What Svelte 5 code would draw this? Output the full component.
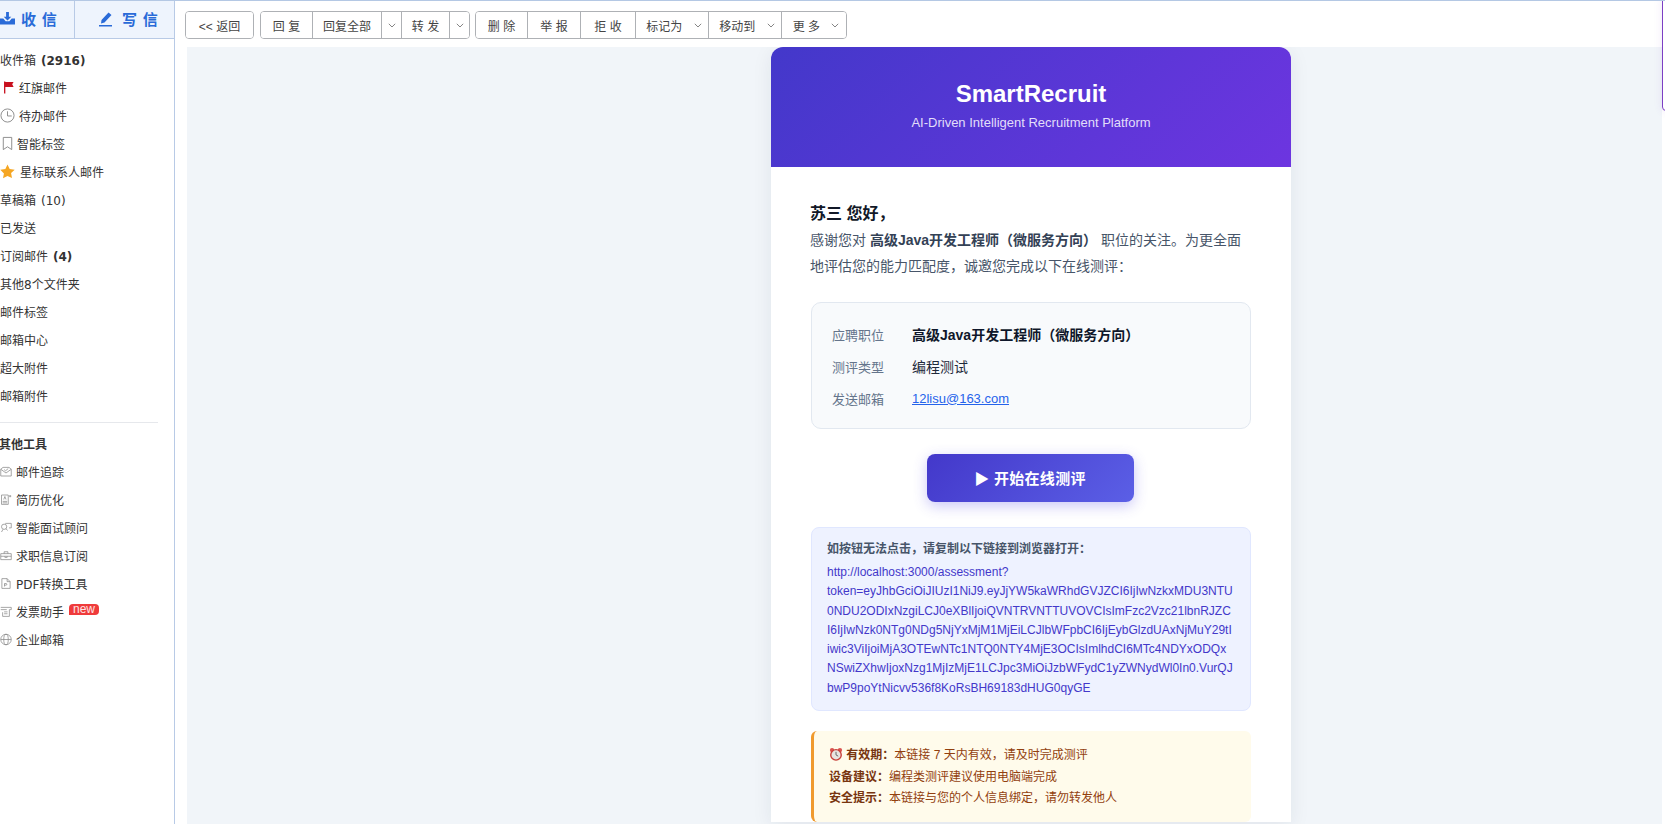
<script>
  // sidebar data
  const folders = [
    { label: '收件箱', count: '(2916)', bold: true },
    { label: '红旗邮件', icon: 'flag', x: 19 },
    { label: '待办邮件', icon: 'clock', x: 19 },
    { label: '智能标签', icon: 'tag', x: 17 },
    { label: '星标联系人邮件', icon: 'star', x: 20 },
    { label: '草稿箱', count: '(10)' },
    { label: '已发送' },
    { label: '订阅邮件', count: '(4)', bold: true },
    { label: '其他8个文件夹' },
    { label: '邮件标签' },
    { label: '邮箱中心' },
    { label: '超大附件' },
    { label: '邮箱附件' }
  ];

  const tools = [
    { label: '邮件追踪', icon: 'track' },
    { label: '简历优化', icon: 'resume' },
    { label: '智能面试顾问', icon: 'chat' },
    { label: '求职信息订阅', icon: 'job' },
    { label: 'PDF转换工具', icon: 'pdf' },
    { label: '发票助手', icon: 'invoice', isNew: true },
    { label: '企业邮箱', icon: 'globe' }
  ];

  const infoRows = [
    { label: '应聘职位', value: '高级Java开发工程师（微服务方向）', strong: true },
    { label: '测评类型', value: '编程测试' }
  ];

  const link = 'http://localhost:3000/assessment?token=eyJhbGciOiJIUzI1NiJ9.eyJjYW5kaWRhdGVJZCI6IjIwNzkxMDU3NTU0NDU2ODIxNzgiLCJ0eXBlIjoiQVNTRVNTTUVOVCIsImFzc2Vzc21lbnRJZCI6IjIwNzk0NTg0NDg5NjYxMjM1MjEiLCJlbWFpbCI6IjEybGlzdUAxNjMuY29tIiwic3ViIjoiMjA3OTEwNTc1NTQ0NTY4MjE3OCIsImlhdCI6MTc4NDYxODQxNSwiZXhwIjoxNzg1MjIzMjE1LCJpc3MiOiJzbWFydC1yZWNydWl0In0.VurQJbwP9poYtNicvv536f8KoRsBH69183dHUG0qyGE';
</script>

{#snippet icon(name)}
  <svg class="ico" viewBox="0 0 16 16" fill="none" stroke="#8a8a8a" stroke-width="1">
    {#if name === 'flag'}
      <path d="M5 1.500v13" stroke="#c8101e" stroke-width="1.400" />
      <path d="M5 2h9.500l-1.500 2.500 1.500 3H5z" fill="#c8101e" stroke="none" />
    {:else if name === 'clock'}
      <circle cx="8" cy="8" r="7" />
      <path d="M8 3.500v5h4.500" />
    {:else if name === 'tag'}
      <path d="M3.500 1.500h9v13L8 11.500l-4.500 3z" />
    {:else if name === 'star'}
      <path d="M8 .4l2.300 4.900 5.400.7-3.900 3.700 1 5.300L8 12.700l-4.800 2.600 1-5.300L.3 6l5.400-.7z" fill="#f5a623" stroke="none" />
    {:else if name === 'track'}
      <path d="M1 5l3-2.500h8L15 5v9H1z" />
      <path d="M1 5l7 5 7-5M5.500 5.500l2 1.500 3.500-3" />
    {:else if name === 'resume'}
      <path d="M2 2h9v12.500H2z" />
      <path d="M5 8l1.500-4L8 8M3.500 10.500h6M3.500 12.500h6M13.500 2v3M12 3.500h3" />
    {:else if name === 'chat'}
      <circle cx="5.500" cy="7" r="3.500" />
      <path d="M8 9.500l2 2.500M2 14l2-3.500M7 2.500h8v6h-3" />
    {:else if name === 'job'}
      <path d="M1 5.500h14v8H1zM5.500 5.500V3h5v2.500M1 9h14M6.500 9v1.500h3V9" />
    {:else if name === 'pdf'}
      <path d="M2.500 1.500h7l4 4v9h-11zM9.500 1.500v4h4M6 12V8h2a1 1 0 010 2.200H6" />
    {:else if name === 'invoice'}
      <path d="M1 2.500h14v3h-2.500v9H3.500V9M1 5.500h8M5.500 8.500h4.500M5.500 11h4.500" />
    {:else if name === 'globe'}
      <circle cx="8" cy="8" r="7" />
      <ellipse cx="8" cy="8" rx="3" ry="7" />
      <path d="M1 8h14" />
    {/if}
  </svg>
{/snippet}

{#snippet caret()}
  <svg class="caret" viewBox="0 0 8 5" width="8" height="5" fill="none" stroke="#777" stroke-width="0.9"><path d="M.8.8L4 4l3.200-3.200" /></svg>
{/snippet}

<div class="page">
  <aside class="sidebar">
    <div class="tabs">
      <div class="tab first">
        <svg viewBox="0 0 16 16" width="15" height="15" fill="#2a6bd8">
          <path d="M6.500 1h3v5H12L8 10 4 6h2.500z" />
          <path d="M0 8h3.500l2.500 3h4l2.500-3H16v6.500H0z" />
        </svg>
        <span>收 信</span>
      </div>
      <div class="tab second">
        <svg viewBox="0 0 16 16" width="16" height="16" fill="#2a6bd8">
          <path d="M10.500 1.500l3 2.500-7 7.500-3.500 1 .5-3.500zM1 14h13v1.500H1z" />
        </svg>
        <span>写 信</span>
      </div>
    </div>

    <nav class="nav">
      {#each folders as f}
        <div class="row">
          {#if f.icon}<span class="ico-slot" style="width:{f.x}px">{@render icon(f.icon)}</span>{/if}
          <span>{f.label}{#if f.count}<span class="count" class:bold={f.bold}>{f.count}</span>{/if}</span>
        </div>
      {/each}
    </nav>

    <div class="sep"></div>

    <div class="tools">
      <div class="row tools-title">其他工具</div>
      {#each tools as t}
        <div class="row">
          <span class="ico-slot tool-slot">{@render icon(t.icon)}</span>
          <span>{t.label}</span>
          {#if t.isNew}<span class="new">new</span>{/if}
        </div>
      {/each}
    </div>
  </aside>

  <main class="main">
    <div class="toolbar">
      <div class="group"><button style="width:67px">&lt;&lt; 返回</button></div>
      <div class="group">
        <button style="width:52px">回 复</button>
        <button style="width:69px">回复全部</button>
        <button style="width:20px" class="only-caret">{@render caret()}</button>
        <button style="width:48px">转 发</button>
        <button style="width:19px" class="only-caret">{@render caret()}</button>
      </div>
      <div class="group">
        <button style="width:52px">删 除</button>
        <button style="width:53px">举 报</button>
        <button style="width:55px">拒 收</button>
        <button style="width:73px" class="has-caret">标记为 {@render caret()}</button>
        <button style="width:73px" class="has-caret">移动到 {@render caret()}</button>
        <button style="width:64px" class="has-caret">更 多 {@render caret()}</button>
      </div>
    </div>

    <div class="content">
      <article class="card">
        <header class="hero">
          <h1>SmartRecruit</h1>
          <p>AI-Driven Intelligent Recruitment Platform</p>
        </header>

        <div class="body">
          <div class="greet">苏三 您好，</div>
          <p class="intro">感谢您对 <strong>高级Java开发工程师（微服务方向）</strong> 职位的关注。为更全面地评估您的能力匹配度，诚邀您完成以下在线测评：</p>

          <div class="info">
            {#each infoRows as r}
              <div class="info-row">
                <span class="info-label">{r.label}</span>
                <span class="info-value" class:strong={r.strong}>{r.value}</span>
              </div>
            {/each}
            <div class="info-row">
              <span class="info-label">发送邮箱</span>
              <a class="mail" href="mailto:12lisu@163.com">12lisu@163.com</a>
            </div>
          </div>

          <div class="cta-wrap"><button class="cta">▶ 开始在线测评</button></div>

          <div class="fallback">
            <div class="fallback-title">如按钮无法点击，请复制以下链接到浏览器打开：</div>
            <div class="fallback-link">{link}</div>
          </div>

          <div class="notice">
            <div>
              <svg class="alarm" viewBox="0 0 16 16" width="14" height="14">
                <circle cx="3.500" cy="3.500" r="2.500" fill="#d9534f" />
                <circle cx="12.500" cy="3.500" r="2.500" fill="#d9534f" />
                <circle cx="8" cy="9" r="6" fill="#e8e4e0" stroke="#c8403a" stroke-width="1.600" />
                <path d="M8 5.500V9l2.500 1.500" fill="none" stroke="#555" stroke-width="1" />
              </svg>
              <strong>有效期：</strong>本链接 7 天内有效，请及时完成测评
            </div>
            <div><strong>设备建议：</strong>编程类测评建议使用电脑端完成</div>
            <div><strong>安全提示：</strong>本链接与您的个人信息绑定，请勿转发他人</div>
          </div>
        </div>
      </article>
    </div>
  </main>

  <div class="edge-popup"></div>
</div>

<style>
  :global(body) {
    margin: 0;
    overflow: hidden;
    background: #fff;
  }
  .page {
    position: relative;
    display: flex;
    width: 1665px;
    height: 824px;
    overflow: hidden;
    border-top: 1px solid #b4c8e4;
    box-sizing: border-box;
    font-family: "Liberation Sans", "Noto Sans CJK SC", sans-serif;
  }

  /* sidebar */
  .sidebar {
    width: 175px;
    flex: none;
    box-sizing: border-box;
    border-right: 1px solid #b8cae6;
    font-family: "DejaVu Sans", "Noto Sans CJK SC", sans-serif;
    font-size: 12px;
    color: #333;
  }
  .tabs {
    display: flex;
    height: 38px;
    box-sizing: border-box;
    background: #eef4fd;
    border-bottom: 1px solid #b8cae6;
  }
  .tab {
    display: flex;
    align-items: center;
    gap: 6px;
    padding-bottom: 2px;
    font-size: 15px;
    font-weight: 700;
    color: #2a6bd8;
    letter-spacing: 0.3px;
    white-space: nowrap;
  }
  .tab.first {
    width: 75px;
    box-sizing: border-box;
    border-right: 1px solid #b8cae6;
  }
  .tab.second {
    padding-left: 23px;
    gap: 8px;
  }
  .nav {
    padding-top: 6px;
  }
  .row {
    display: flex;
    align-items: center;
    height: 28px;
    white-space: nowrap;
  }
  .count {
    margin-left: 5px;
  }
  .count.bold {
    font-weight: 700;
  }
  .ico-slot {
    display: inline-flex;
    flex: none;
    align-items: center;
  }
  .tool-slot {
    width: 16px;
  }
  .ico {
    width: 15px;
    height: 15px;
  }
  .tool-slot .ico {
    width: 12px;
    height: 13px;
  }
  .sep {
    width: 158px;
    height: 1px;
    margin: 13px 0 6px;
    background: #e6e8ec;
  }
  .tools-title {
    font-weight: 700;
    margin-left: -1px;
  }
  .new {
    margin-left: 5px;
    margin-top: -4px;
    padding: 0 4px;
    height: 11px;
    line-height: 10px;
    font-size: 12px;
    color: #ffe3e3;
    background: #ef3b3b;
    border-radius: 4px 4px 4px 0;
    font-family: "Liberation Sans", sans-serif;
  }

  /* toolbar */
  .main {
    flex: 1;
    min-width: 0;
    display: flex;
    flex-direction: column;
  }
  .toolbar {
    display: flex;
    gap: 6px;
    height: 46px;
    flex: none;
    box-sizing: border-box;
    padding: 10px 0 0 10px;
  }
  .group {
    display: flex;
    height: 28px;
    border: 1px solid #aeb1b5;
    border-radius: 4px;
    box-sizing: border-box;
    overflow: hidden;
  }
  .group:last-child {
    margin-left: -1px;
  }
  .group button {
    display: flex;
    align-items: center;
    justify-content: center;
    gap: 8px;
    padding: 0;
    box-sizing: border-box;
    background: #fff;
    border: 0;
    border-right: 1px solid #aeb1b5;
    font: inherit;
    font-size: 12px;
    color: #444;
    white-space: pre;
  }
  .group button.has-caret {
    padding-left: 4px;
  }
  .group button:last-child {
    border-right: 0;
  }

  /* message */
  .content {
    flex: 1;
    min-height: 0;
    margin: 0 3px 0 12px;
    background: #f1f5f9;
    overflow: hidden;
  }
  .card {
    width: 520px;
    margin-left: 584px;
    background: #fff;
    border-radius: 12px 12px 0 0;
    box-shadow: 0 4px 20px rgba(30, 41, 59, 0.08);
  }
  .hero {
    height: 120px;
    padding-top: 32px;
    box-sizing: border-box;
    text-align: center;
    color: #fff;
    border-radius: 12px 12px 0 0;
    background: linear-gradient(135deg, #4338ca, #6d35e0);
  }
  .hero h1 {
    margin: 0;
    font-size: 24px;
    line-height: 30px;
    font-weight: 700;
  }
  .hero p {
    margin: 4px 0 0;
    font-size: 13px;
    line-height: 20px;
    color: #e2defa;
  }
  .body {
    padding: 35px 40px 0;
  }
  .greet {
    margin-left: -1px;
    font-size: 16px;
    line-height: 24px;
    font-weight: 700;
    color: #111827;
  }
  .intro {
    margin: 2px 0 -1px -1px;
    font-size: 14px;
    line-height: 25.5px;
    color: #475569;
  }
  .intro strong {
    color: #334155;
  }
  .info {
    margin-top: 24px;
    padding: 15px 20px;
    height: 127px;
    box-sizing: border-box;
    background: #f8fafc;
    border: 1px solid #e2e8f0;
    border-radius: 10px;
  }
  .info-row {
    display: flex;
    align-items: center;
    height: 32px;
    font-size: 13px;
  }
  .info-label {
    width: 80px;
    flex: none;
    color: #64748b;
  }
  .info-value {
    font-size: 14px;
    color: #1e293b;
  }
  .info-value.strong {
    font-weight: 700;
    color: #0f172a;
  }
  .mail {
    color: #2563eb;
  }
  .cta-wrap {
    display: flex;
    justify-content: center;
    margin-top: 25px;
    padding-right: 2px;
  }
  .cta {
    width: 207px;
    height: 48px;
    padding: 0 0 2px;
    border: 0;
    border-radius: 8px;
    background: linear-gradient(135deg, #4338ca, #5b5fe6);
    color: #fff;
    font: inherit;
    font-size: 15px;
    font-weight: 700;
    letter-spacing: 0.3px;
    box-shadow: 0 4px 14px rgba(79, 70, 229, 0.3);
  }
  .fallback {
    margin-top: 25px;
    padding: 12px 16px 12px 15px;
    background: #eef2ff;
    border: 1px solid #e0e7ff;
    border-radius: 8px;
  }
  .fallback-title {
    font-size: 12px;
    line-height: 18px;
    font-weight: 700;
    color: #475569;
    margin-bottom: 5px;
  }
  .fallback-link {
    font-size: 12px;
    line-height: 19.300px;
    color: #4338ca;
    overflow-wrap: anywhere;
  }
  .notice {
    margin-top: 20px;
    padding: 14px 15px 12px;
    background: #fffbeb;
    border-left: 3px solid #f09a2e;
    border-radius: 6px;
    font-size: 12px;
    line-height: 21.600px;
    color: #92400e;
  }
  .notice strong {
    color: #78350f;
  }
  .alarm {
    vertical-align: -2px;
  }

  /* clipped panel at the right edge */
  .edge-popup {
    position: absolute;
    top: -4px;
    left: 1662px;
    width: 40px;
    height: 112px;
    background: #fff;
    border: 1px solid #7c3fc4;
    border-radius: 4px;
    box-shadow: 0 0 8px rgba(124, 63, 196, 0.12);
  }
</style>
